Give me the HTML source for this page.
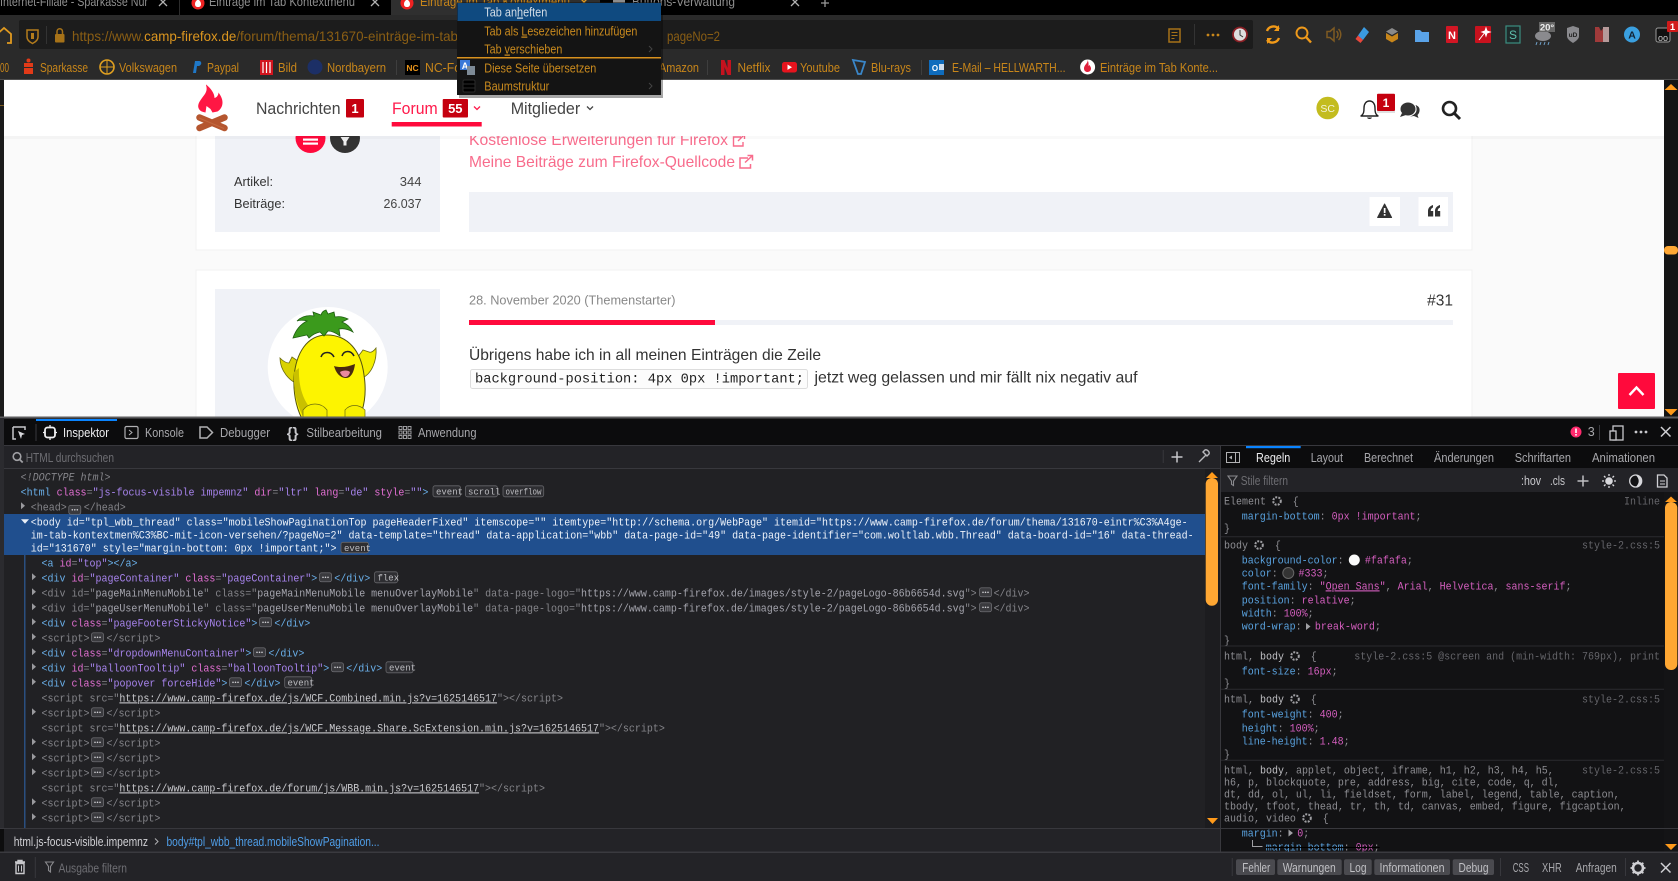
<!DOCTYPE html>
<html lang="de"><head><meta charset="utf-8"><title>Einträge im Tab Kontextmenü</title>
<style>
html,body{margin:0;padding:0;width:1678px;height:881px;overflow:hidden;background:#000}
svg{display:block}
text{font-family:"Liberation Sans",Arial,sans-serif;white-space:pre}
.m text,text.m{font-family:"Liberation Mono",monospace;font-size:11px}
.b text{font-size:12.5px;fill:#c8861a}
.t{fill:#6ab0ea}.n{fill:#e36fd3}.v{fill:#a884ee}.d{fill:#85858a}.e{fill:#a5a5ae}
.w{fill:#e8eef6}.u{fill:#c9c9cd;text-decoration:underline}
.p{fill:#5aa3e0}.q{fill:#d65fc0}.s{fill:#8e8e93}.o{fill:#65656a}
.ui text{font-size:12.5px;fill:#a8a8ac}
.pill{fill:#3a3a3e;stroke:#77777c;stroke-width:.7}
.bd text{font-size:9px;fill:#bcbcc0;font-family:"Liberation Mono",monospace}
.bdr{fill:#2e2e32;stroke:#66666a;stroke-width:.8}
.gear{fill:none;stroke:#a0a0a4;stroke-width:2}
</style></head><body>
<svg xmlns="http://www.w3.org/2000/svg" width="1678" height="881" viewBox="0 0 1678 881">
<defs><g id="pl"><rect width="12" height="9" rx="2" fill="#3a3a3e" stroke="#77777c" stroke-width=".7"/><circle cx="3.500" cy="4.500" r=".8" fill="#d0d0d4"/><circle cx="6" cy="4.500" r=".8" fill="#d0d0d4"/><circle cx="8.500" cy="4.500" r=".8" fill="#d0d0d4"/></g></defs>
<rect width="1678" height="881" fill="#0d0d0e"/>

<!-- PAGE -->
<rect x="4" y="80" width="1660" height="338" fill="#fafafa"/>
<rect x="196" y="130" width="1276" height="120" fill="#fff" stroke="#f1f1f1"/>
<rect x="196" y="270" width="1276" height="150" fill="#fff" stroke="#f1f1f1"/>
<rect x="215" y="130" width="225" height="102" fill="#f0f2f7"/>
<circle cx="310.5" cy="138" r="15" fill="#ff0a3c"/>
<rect x="303" y="138.500" width="15" height="2.200" fill="#fff"/><rect x="303" y="142.500" width="15" height="2.200" fill="#fff"/>
<circle cx="345" cy="138" r="15" fill="#333"/>
<path d="M340.500 137h9l-3 4.500v4h-3v-4z" fill="#eee"/>
<text x="234" y="186" font-size="13" fill="#333" textLength="39" lengthAdjust="spacingAndGlyphs">Artikel:</text>
<text x="421.500" y="186" font-size="13" fill="#444" text-anchor="end">344</text>
<text x="234" y="208" font-size="13" fill="#333" textLength="51" lengthAdjust="spacingAndGlyphs">Beiträge:</text>
<text x="421.500" y="208" font-size="13" fill="#444" text-anchor="end" textLength="38" lengthAdjust="spacingAndGlyphs">26.037</text>

<text x="469" y="145" font-size="16" fill="#f86c8c" textLength="259" lengthAdjust="spacingAndGlyphs">Kostenlose Erweiterungen für Firefox</text>
<path d="M741 137h-7.500v9h9.500v-4M738 141l6-6M740 134.500h4.500v4.500" fill="none" stroke="#f86c8c" stroke-width="1.400"/>
<text x="469" y="167" font-size="16" fill="#f86c8c" textLength="266" lengthAdjust="spacingAndGlyphs">Meine Beiträge zum Firefox-Quellcode</text>
<path d="M748 158h-8v10h10.500v-4M745 162.500l7-6.500M747.500 155.500h5v5" fill="none" stroke="#f86c8c" stroke-width="1.500"/>

<rect x="469" y="192" width="984" height="40" fill="#f0f2f7"/>
<rect x="1369.500" y="197" width="30.500" height="29" fill="#fff"/>
<rect x="1418.500" y="197" width="29.500" height="29" fill="#fff"/>
<path d="M1384.600 204l7 13.500h-14z" fill="#333" stroke="#333" stroke-linejoin="round"/>
<rect x="1383.800" y="208" width="1.700" height="5" fill="#fff"/><rect x="1383.800" y="214" width="1.700" height="1.700" fill="#fff"/>
<path d="M1433 205c-3 1-5 3-5 6v5.500h5.200v-5.500h-2.500c0-2 1-3 2.300-3.500zM1440 205c-3 1-5 3-5 6v5.500h5.200v-5.500h-2.500c0-2 1-3 2.300-3.500z" fill="#333"/>

<rect x="215" y="289" width="225" height="130" fill="#f0f2f7"/>
<ellipse cx="327.700" cy="367" rx="60" ry="60" fill="#fff"/>
<!-- pineapple avatar -->
<path d="M301 385c-12-3-21-15-21-27 3 3 6 5 9 5l3-6 9 6v22z" fill="#d9d200" stroke="#6b6b10" stroke-width=".8"/>
<path d="M362 378c10-4 15-18 14-30-2 3-5 5-7 4l-6-2-6 8z" fill="#f4ef00" stroke="#6b6b10" stroke-width=".8"/>
<path d="M327 335c-20 0-31 18-33 42-1 20 4 36 10 45h54c6-14 9-28 6-47-3-24-16-40-37-40z" fill="#fdf400" stroke="#55550c" stroke-width="1"/>
<path d="M294 372c-1 20 4 36 10 46h18c-14-8-24-24-23-50z" fill="#c9c000"/>
<path d="M303 410c6-8 18-8 24 0v8h-24zM345 410c5-6 14-6 20 0v8h-20z" fill="#f7f000" stroke="#6b6b10" stroke-width=".7"/>
<path d="M293 338c3-9 8-14 14-17-4-1-7-1-10 0 5-5 11-6 17-5l-1-4 8 3c1-3 2-4 5-5l2 4 6-2 1 5c5-1 9 0 13 2l-6 3c5 2 9 6 11 10-5-3-9-4-14-3l1 7c-4-3-8-5-12-5l-4 5-4-4c-5 1-8 3-11 6l-2-3c-5 1-9 2-14 3z" fill="#3b9a1c" stroke="#1e5e10" stroke-width=".8"/>
<path d="M321 357c2-6 10-6 13 0M342 356c2-6 9-6 12 0" fill="none" stroke="#222" stroke-width="1.600"/>
<path d="M334 366c6 2 14 1 21-2-1 8-4 14-9 14-6 0-10-5-12-12z" fill="#4a2a10"/>
<path d="M340 372c3-2 8-2 10 0-1 4-3 5-5 5-2 0-4-2-5-5z" fill="#e98aa0"/>

<text x="469" y="304.500" font-size="13" fill="#888" textLength="206.500" lengthAdjust="spacingAndGlyphs">28. November 2020 (Themenstarter)</text>
<text x="1453" y="305.500" font-size="15.500" fill="#333" text-anchor="end">#31</text>
<rect x="469" y="320" width="984" height="5" fill="#f0f2f7"/>
<rect x="469" y="320" width="246" height="5" fill="#ff0a3c"/>
<text x="469" y="360" font-size="16" fill="#333" textLength="352" lengthAdjust="spacingAndGlyphs">Übrigens habe ich in all meinen Einträgen die Zeile</text>
<rect x="470.500" y="369.500" width="337" height="19" rx="2" fill="#fcfcfc" stroke="#ddd"/>
<text x="475" y="382.500" style="font-family:'Liberation Mono',monospace" font-size="13.700" fill="#222" textLength="329" lengthAdjust="spacingAndGlyphs">background-position: 4px 0px !important;</text>
<text x="814.500" y="382.500" font-size="16" fill="#333" textLength="323" lengthAdjust="spacingAndGlyphs">jetzt weg gelassen und mir fällt nix negativ auf</text>

<rect x="1618" y="373" width="37" height="36" rx="1" fill="#ff0a3c"/>
<path d="M1629.500 395l7-7.500 7 7.500" fill="none" stroke="#fff" stroke-width="2.400"/>

<!-- header -->
<rect x="4" y="136" width="1660" height="3" fill="#000" opacity=".025"/>
<rect x="4" y="80" width="1660" height="56" fill="#fff"/>
<path d="M206 85c2 6-1 9-4 13-3 4-4.500 7-3.500 10 1 3 4 4 7 4.500l1-6.500 4 3 2 3.500 5-1c3-2 5-5 5-9 0-4-2-7-4-10 0 3-2 5-4 5.500 0-5-4-10-8.500-13.500z" fill="#ff1744"/>
<path d="M199.500 117.500l25 10.500M224.500 117.500l-25 10.500" stroke="#b5562f" stroke-width="6.500" stroke-linecap="round" fill="none"/>
<path d="M199 118l25 10.500" stroke="#d07a50" stroke-width="1" opacity=".5"/>
<text x="256" y="114" font-size="16.500" fill="#444" textLength="84.500" lengthAdjust="spacingAndGlyphs">Nachrichten</text>
<rect x="346" y="99" width="18" height="18.500" rx="1" fill="#c5000f"/>
<text x="355" y="113" font-size="13" font-weight="bold" fill="#fff" text-anchor="middle">1</text>
<text x="392" y="114" font-size="16.500" fill="#ff1a4b" textLength="45.700" lengthAdjust="spacingAndGlyphs">Forum</text>
<rect x="442.700" y="99" width="25.300" height="18.500" rx="1" fill="#c5000f"/>
<text x="455.300" y="113" font-size="13" font-weight="bold" fill="#fff" text-anchor="middle">55</text>
<path d="M474 106.500l3 3 3-3" fill="none" stroke="#ff1a4b" stroke-width="1.300"/>
<rect x="391.700" y="122" width="90" height="4.500" fill="#ff0a3c"/>
<text x="510.700" y="114" font-size="16.500" fill="#444" textLength="69.500" lengthAdjust="spacingAndGlyphs">Mitglieder</text>
<path d="M587 106.500l3 3 3-3" fill="none" stroke="#444" stroke-width="1.300"/>

<circle cx="1327.700" cy="108" r="11.300" fill="#c3bc1f"/>
<text x="1327.700" y="112" font-size="10.500" fill="#f4f4d8" text-anchor="middle">SC</text>
<path d="M1361 116c3-2 3-5 3-8 0-4 2-7 5.500-7s5.500 3 5.500 7c0 3 0 6 3 8z" fill="none" stroke="#222" stroke-width="1.400" stroke-linejoin="round"/>
<path d="M1367 117.500c.5 2 4.500 2 5 0z" fill="#222"/>
<rect x="1377" y="93.700" width="18" height="17.300" rx="1" fill="#c5000f"/>
<rect x="1377" y="111" width="18" height="2" fill="#000" opacity=".12"/>
<text x="1386" y="107" font-size="12" font-weight="bold" fill="#fff" text-anchor="middle">1</text>
<ellipse cx="1408" cy="109" rx="7.500" ry="6.500" fill="#333"/><path d="M1402 113l-2 4 6-2z" fill="#333"/>
<path d="M1415.500 105c3 1 4.500 3 4 6-.3 2-1 3-2 4l1 3-4.500-2-4 .5c3-1 6-3 6.500-6 .2-2 0-3.500-1-5.500z" fill="#333"/>
<circle cx="1449.500" cy="108.500" r="6.500" fill="none" stroke="#222" stroke-width="2.600"/>
<path d="M1454.500 113.500l5.500 5.500" stroke="#222" stroke-width="3"/>

<!-- page scrollbar and left strip -->
<rect x="1664" y="80" width="14" height="338" fill="#141414"/>
<path d="M1664.500 90l6.500-6 6.500 6z" fill="#ff9a1a"/>
<path d="M1664.500 409l6.500 6.500 6.500-6.500z" fill="#ff9a1a"/>
<rect x="1664" y="246" width="14" height="8.500" rx="4" fill="#ffa733"/>
<rect x="0" y="80" width="4" height="338" fill="#1b1b1b"/>
<rect x="0" y="105" width="4" height="1" fill="#7a5a20"/>

<!-- BROWSER CHROME -->
<rect x="0" y="0" width="1678" height="15" fill="#000"/>
<rect x="0" y="15" width="1678" height="65" fill="#2a2a2a"/>
<rect x="0" y="79" width="1678" height="1" fill="#4e4e4e"/>
<rect x="391" y="0" width="209" height="15" fill="#2f2f2f"/>
<g font-size="13">
<text x="0" y="6" fill="#8e8e8e" textLength="148" lengthAdjust="spacingAndGlyphs">Internet-Filiale - Sparkasse Nür</text>
<text x="209" y="6" fill="#8e8e8e" textLength="146" lengthAdjust="spacingAndGlyphs">Einträge im Tab Kontextmenü</text>
<text x="420" y="6" fill="#c8861a" textLength="150" lengthAdjust="spacingAndGlyphs">Einträge im Tab Kontextmenü</text>
<text x="632" y="6" fill="#8e8e8e" textLength="103" lengthAdjust="spacingAndGlyphs">Buttons-Verwaltung</text>
</g>
<path d="M159 -2l8 8M167 -2l-8 8M371 -2l8 8M379 -2l-8 8M791 -2l8 8M799 -2l-8 8" stroke="#b0b0b0" stroke-width="1.300" fill="none"/>
<path d="M580 -2l8 8M588 -2l-8 8" stroke="#e09a20" stroke-width="1.300" fill="none"/>
<path d="M825 0v7M821 3h8" stroke="#999" stroke-width="1.300"/>
<rect x="179" y="0" width="1" height="15" fill="#2c2c2c"/>
<circle cx="198" cy="3" r="6.500" fill="#e22"/><circle cx="407" cy="3" r="6.500" fill="#e22"/>
<path d="M198 -1c-2 2-3 3-3 5s1 3 3 3 3-1 3-3-1-3-3-5zM407 -1c-2 2-3 3-3 5s1 3 3 3 3-1 3-3-1-3-3-5z" fill="#fff"/>
<rect x="613" y="0" width="12" height="7" fill="#8c8c8c"/>

<!-- url bar -->
<rect x="19" y="20" width="1234" height="29" rx="2" fill="#1c1c1c"/>
<path d="M-5 36l9-8 7 6v9h-4" fill="none" stroke="#e09a20" stroke-width="1.800"/>
<path d="M27 30h11v7c0 3-2.500 5-5.500 6.500C29.500 42 27 40 27 37z" fill="none" stroke="#b47c1c" stroke-width="1.500"/>
<rect x="31" y="33" width="3" height="6" fill="#b47c1c"/>
<rect x="46" y="26" width="1" height="18" fill="#333"/>
<rect x="55" y="34" width="9.500" height="8.500" rx="1" fill="#a67218"/><path d="M57 34v-2.500a2.700 2.700 0 0 1 5.500 0V34" fill="none" stroke="#a67218" stroke-width="1.500"/>
<text x="72" y="41" font-size="14" fill="#8a5e14" textLength="386" lengthAdjust="spacingAndGlyphs">https://www.<tspan fill="#dc961f">camp-firefox.de</tspan>/forum/thema/131670-einträge-im-tab</text>
<text x="667" y="41" font-size="14" fill="#8a5e14" textLength="53" lengthAdjust="spacingAndGlyphs">pageNo=2</text>
<rect x="1169" y="29" width="11" height="13" fill="none" stroke="#a67218" stroke-width="1.500"/>
<path d="M1171.500 32.500h6M1171.500 35.500h6M1171.500 38.500h3" stroke="#a67218"/>
<rect x="1194" y="24" width="1" height="21" fill="#333"/>
<circle cx="1208" cy="35" r="1.400" fill="#c8861a"/><circle cx="1213" cy="35" r="1.400" fill="#c8861a"/><circle cx="1218" cy="35" r="1.400" fill="#c8861a"/>
<circle cx="1240" cy="34.500" r="7" fill="#ddd" stroke="#8a1f25" stroke-width="1.800"/><path d="M1240 30v5l3 2" stroke="#333" fill="none"/>
<!-- toolbar icons -->
<path d="M1267 31a7 7 0 0 1 12-2M1279 38a7 7 0 0 1-12 2" fill="none" stroke="#f29a18" stroke-width="2.400"/>
<path d="M1279 25v6h-5zM1267 44v-6h5z" fill="#f29a18"/>
<circle cx="1302" cy="33" r="5.500" fill="none" stroke="#f09a1a" stroke-width="1.900"/><path d="M1306 37l5 5.500" stroke="#f09a1a" stroke-width="2.400"/>
<path d="M1327 31.500h3l4-3.500v13l-4-3.500h-3zM1336.500 31c2 2 2 5 0 7M1338.500 29c3 3 3 8 0 11" fill="none" stroke="#7e5a22" stroke-width="1.500"/>
<path d="M1364 27l5 5-6 8-5-4.500z" fill="#3a9ae0"/><path d="M1358 35.500l5 4.500-2.500 3-5-4z" fill="#e8473c"/>
<path d="M1392 28l6 3.500-6 3.500-6-3.500z" fill="#8a8a8a"/><path d="M1386 33l6 3.500v6l-6-3.500zM1398 33l-6 3.500v6l6-3.500z" fill="#c8861a"/>
<path d="M1415 30h5l2 2h7v10h-14z" fill="#5aa3e8"/>
<rect x="1446" y="26" width="12" height="17" rx="1" fill="#d21624"/><text x="1452" y="39" font-size="11" font-weight="bold" fill="#fff" text-anchor="middle">N</text>
<rect x="1475" y="26" width="16" height="17" rx="1" fill="#c8121e"/><path d="M1479 40l7-9M1486 28l1 3 3 1-3 1-1 3-1-3-3-1 3-1z" stroke="#fff" fill="#fff" stroke-width="1"/>
<rect x="1506" y="26" width="14" height="17" fill="#1e2b2b" stroke="#3b8e80" stroke-width="1.200"/><text x="1513" y="39" font-size="12" fill="#5fc0ae" text-anchor="middle">S</text>
<ellipse cx="1543" cy="36" rx="8" ry="5" fill="#8a8a8e"/><path d="M1537 42l-1 3M1541 42l-1 3M1545 42l-1 3M1549 42l-1 3" stroke="#6fa0c8"/>
<rect x="1539" y="22" width="16" height="10" fill="#666"/><text x="1547" y="30.500" font-size="9.500" font-weight="bold" fill="#eee" text-anchor="middle">20°</text>
<path d="M1567 28l6-2 6 2v8c0 3-3 5-6 7-3-2-6-4-6-7z" fill="#8a8a8e"/><text x="1573" y="37" font-size="6.500" font-weight="bold" fill="#222" text-anchor="middle">uD</text>
<path d="M1595 27h4l2 4 3-4h5v15h-14z" fill="#a03a3a"/><path d="M1603 27h6v15h-6z" fill="#b59a9a"/>
<circle cx="1632" cy="34.500" r="8" fill="#3aa0e0"/><text x="1632" y="38.500" font-size="10.500" font-weight="bold" fill="#123" text-anchor="middle">A</text>
<rect x="1656" y="28" width="14" height="14" rx="2" fill="#111" stroke="#9a9a9a"/><text x="1663" y="41" font-size="9" fill="#ccc" text-anchor="middle">oo</text>
<rect x="1667" y="21" width="11" height="11" rx="1" fill="#d11a1a"/><text x="1672.500" y="30" font-size="9.500" font-weight="bold" fill="#fff" text-anchor="middle">1</text>

<!-- bookmarks -->
<g class="b">
<text x="0" y="72" textLength="9" lengthAdjust="spacingAndGlyphs">00</text>
<rect x="24" y="63" width="9" height="4" fill="#e23a18"/><rect x="24" y="68" width="9" height="6" fill="#e23a18"/><circle cx="28.500" cy="60.500" r="2" fill="#e23a18"/>
<text x="40" y="72" textLength="48" lengthAdjust="spacingAndGlyphs">Sparkasse</text>
<circle cx="107" cy="67" r="7" fill="none" stroke="#e0a020" stroke-width="1.600"/><path d="M100 67h14M107 60v14" stroke="#e0a020"/>
<text x="119" y="72" textLength="58" lengthAdjust="spacingAndGlyphs">Volkswagen</text>
<path d="M195 61h4c3 0 3 4 0 5h-2l-1 7h-3z" fill="#1f78c8"/>
<text x="207" y="72" textLength="32" lengthAdjust="spacingAndGlyphs">Paypal</text>
<rect x="260" y="60" width="13" height="15" fill="#d2141e"/><path d="M263 62v11M266.500 62v11M270 62v11" stroke="#fff" stroke-width="1.200"/>
<text x="278" y="72" textLength="19" lengthAdjust="spacingAndGlyphs">Bild</text>
<circle cx="315" cy="67" r="7.500" fill="#1c2f66"/>
<text x="327" y="72" textLength="59" lengthAdjust="spacingAndGlyphs">Nordbayern</text>
<rect x="396" y="60" width="1" height="15" fill="#3e3e3e"/>
<rect x="405" y="60" width="15" height="15" fill="#000"/><text x="412.500" y="71" style="font-size:8.500px;fill:#e8931a;font-weight:bold" text-anchor="middle">NC</text>
<text x="425" y="72" textLength="36" lengthAdjust="spacingAndGlyphs">NC-Fo</text>
<text x="659" y="72" textLength="40" lengthAdjust="spacingAndGlyphs">Amazon</text>
<rect x="707" y="60" width="1" height="15" fill="#3e3e3e"/>
<path d="M721 60h3.500l3 8v-8h3.500v15h-3.500l-3-8v8H721z" fill="#c4121e"/>
<text x="737.500" y="72" textLength="33" lengthAdjust="spacingAndGlyphs">Netflix</text>
<rect x="782" y="62" width="15" height="10.500" rx="2.500" fill="#e6141e"/><path d="M787.500 64.500l4.500 2.700-4.500 2.700z" fill="#fff"/>
<text x="800" y="72" textLength="40" lengthAdjust="spacingAndGlyphs">Youtube</text>
<path d="M853 60l12 2-4 12h-3z" fill="none" stroke="#3a86c8" stroke-width="1.800"/>
<text x="871" y="72" textLength="40" lengthAdjust="spacingAndGlyphs">Blu-rays</text>
<rect x="921" y="60" width="1" height="15" fill="#3e3e3e"/>
<rect x="929" y="60" width="15" height="15" fill="#0f6cbd"/><text x="935" y="71" style="font-size:8px;fill:#fff;font-weight:bold" text-anchor="middle">O</text><rect x="939" y="64" width="5" height="6" fill="#cde"/>
<text x="952" y="72" textLength="113.500" lengthAdjust="spacingAndGlyphs">E-Mail – HELLWARTH...</text>
<circle cx="1087.600" cy="67" r="7.500" fill="#fff"/><path d="M1087.500 60c1 3-4 5-3.500 9 .3 2 2 3 3.500 3s3.500-1 3.500-3.500c0-1.500-1-2.500-1.500-3.500l-1 1c.2-2.500 0-4.500-1-6z" fill="#e0203c"/>
<text x="1100" y="72" textLength="118" lengthAdjust="spacingAndGlyphs">Einträge im Tab Konte...</text>
</g>

<!-- context menu -->
<rect x="459" y="5" width="204" height="93" fill="#000" opacity=".35"/>
<rect x="457" y="2.500" width="204" height="92.500" fill="#141414"/>
<rect x="457.500" y="3" width="203.500" height="18" fill="#0f4a80"/>
<g font-size="12.500">
<text x="484.300" y="16.500" fill="#d3dde6" textLength="63" lengthAdjust="spacingAndGlyphs">Tab an<tspan text-decoration="underline">h</tspan>eften</text>
<text x="484.300" y="35.500" fill="#c98a1e" textLength="153" lengthAdjust="spacingAndGlyphs">Tab als <tspan text-decoration="underline">L</tspan>esezeichen hinzufügen</text>
<text x="484.300" y="53.500" fill="#c98a1e" textLength="78" lengthAdjust="spacingAndGlyphs">Tab <tspan text-decoration="underline">v</tspan>erschieben</text>
<text x="484.300" y="72.500" fill="#c98a1e" textLength="112" lengthAdjust="spacingAndGlyphs">Diese Seite übersetzen</text>
<text x="484.300" y="90.500" fill="#c98a1e" textLength="65" lengthAdjust="spacingAndGlyphs">Baumstruktur</text>
</g>
<rect x="457" y="57" width="204" height="1.500" fill="#d8911e"/>
<path d="M649 46l3 3-3 3M649 83l3 3-3 3" fill="none" stroke="#444"/>
<rect x="460" y="60" width="10" height="10" fill="#3a78d8"/><text x="465" y="69" font-size="9" font-weight="bold" fill="#fff" text-anchor="middle">A</text>
<rect x="467" y="66" width="8" height="9" fill="#7d8a96"/>
<rect x="463" y="80" width="12" height="12" rx="1.500" fill="#000" stroke="#2a2a2a"/><path d="M463 84h12M463 88h12" stroke="#2a2a2a"/>

<!-- DEVTOOLS -->
<rect x="0" y="416.500" width="1678" height="2" fill="#5c5c5e"/>
<rect x="0" y="418.500" width="1678" height="27" fill="#0c0c0d"/>
<rect x="0" y="445" width="1220" height="23" fill="#232327"/>
<rect x="0" y="445" width="1678" height="1" fill="#38383d"/>
<rect x="0" y="468" width="1220" height="1" fill="#38383d"/>
<rect x="4" y="469" width="1216" height="359" fill="#212124"/>
<rect x="0" y="418" width="4" height="411" fill="#2b2b2f"/>
<rect x="1220" y="446" width="458" height="23" fill="#0c0c0d"/>
<rect x="1220" y="468" width="458" height="24" fill="#232327"/>
<rect x="1220" y="492" width="458" height="360" fill="#121214"/>
<rect x="1220" y="446" width="1" height="406" fill="#38383d"/>
<rect x="36" y="419" width="81" height="2" fill="#0a84ff"/>
<path d="M13 427h12v3M13 427v12h3" fill="none" stroke="#c8c8cc" stroke-width="1.500"/><path d="M18 431l7 3-3 1-1 4z" fill="#d8d8dc"/>
<rect x="35.500" y="424" width="1" height="17" fill="#38383d"/>
<rect x="45" y="427.500" width="10" height="10" rx="2.500" fill="none" stroke="#f0f0f2" stroke-width="1.800"/><path d="M50 425v2.500M50 437.500v2.500M43 432.500h2M55 432.500h2" stroke="#f0f0f2" stroke-width="1.300"/>
<rect x="125" y="426.500" width="13" height="12" rx="1.500" fill="none" stroke="#b1b1b3" stroke-width="1.200"/><path d="M129 430l3 2.500-3 2.500" fill="none" stroke="#b1b1b3"/>
<path d="M200 427h7l5.500 5.500-5.500 5.500h-7z" fill="none" stroke="#b1b1b3" stroke-width="1.500"/>
<text x="292.600" y="438" font-size="15" font-weight="bold" fill="#c8c8cc" text-anchor="middle">{}</text>
<g fill="none" stroke="#a8a8ac" stroke-width=".9"><rect x="399" y="426.500" width="3" height="3"/><rect x="403.500" y="426.500" width="3" height="3"/><rect x="408" y="426.500" width="3" height="3"/><rect x="399" y="431" width="3" height="3"/><rect x="403.500" y="431" width="3" height="3"/><rect x="408" y="431" width="3" height="3"/><rect x="399" y="435.500" width="3" height="3"/><rect x="403.500" y="435.500" width="3" height="3"/><rect x="408" y="435.500" width="3" height="3"/></g>
<g class="ui">
<text x="63" y="437" style="fill:#eeeef0" textLength="46" lengthAdjust="spacingAndGlyphs">Inspektor</text>
<text x="145" y="437" textLength="39" lengthAdjust="spacingAndGlyphs">Konsole</text>
<text x="220" y="437" textLength="50" lengthAdjust="spacingAndGlyphs">Debugger</text>
<text x="306.400" y="437" textLength="75.600" lengthAdjust="spacingAndGlyphs">Stilbearbeitung</text>
<text x="418" y="437" textLength="58.500" lengthAdjust="spacingAndGlyphs">Anwendung</text>
<text x="25.700" y="462" style="fill:#6d6d72" textLength="88.300" lengthAdjust="spacingAndGlyphs">HTML durchsuchen</text>
<text x="1256" y="462" style="fill:#eeeef0" textLength="34.300" lengthAdjust="spacingAndGlyphs">Regeln</text>
<text x="1310.700" y="462" textLength="32.300" lengthAdjust="spacingAndGlyphs">Layout</text>
<text x="1364" y="462" textLength="49" lengthAdjust="spacingAndGlyphs">Berechnet</text>
<text x="1434" y="462" textLength="60" lengthAdjust="spacingAndGlyphs">Änderungen</text>
<text x="1514.700" y="462" textLength="56.300" lengthAdjust="spacingAndGlyphs">Schriftarten</text>
<text x="1592" y="462" textLength="63" lengthAdjust="spacingAndGlyphs">Animationen</text>
<text x="1240.700" y="485" style="fill:#6d6d72" textLength="47.300" lengthAdjust="spacingAndGlyphs">Stile filtern</text>
<text x="1521" y="485" style="fill:#c8c8cc" textLength="20" lengthAdjust="spacingAndGlyphs">:hov</text>
<text x="1550" y="485" style="fill:#c8c8cc" textLength="15" lengthAdjust="spacingAndGlyphs">.cls</text>
<text x="1587.700" y="436" style="fill:#a8a8ac">3</text>
</g>
<circle cx="17" cy="456.500" r="3.800" fill="none" stroke="#a0a0a4" stroke-width="1.600"/><path d="M19.700 459.500l3 3" stroke="#a0a0a4" stroke-width="1.800"/>
<rect x="1162.700" y="450" width="1" height="13" fill="#38383d"/>
<path d="M1177 451.500v11M1171.500 457h11" stroke="#c8c8cc" stroke-width="1.500"/>
<path d="M1199 462l7-7M1203 452l4 4 2-2c1-2-2-5-4-4z" fill="none" stroke="#b8b8bc" stroke-width="1.400"/>
<!-- devtools top right -->
<circle cx="1576" cy="432" r="5.500" fill="#ff2a6d"/><rect x="1575.200" y="428.500" width="1.600" height="4.500" fill="#fff"/><rect x="1575.200" y="434" width="1.600" height="1.600" fill="#fff"/>
<rect x="1599" y="425" width="1" height="15" fill="#38383d"/>
<rect x="1613" y="426" width="10" height="14" fill="none" stroke="#c8c8cc" stroke-width="1.300"/><rect x="1610" y="431" width="6" height="9" fill="#0c0c0d" stroke="#c8c8cc" stroke-width="1.300"/>
<circle cx="1636" cy="432" r="1.400" fill="#c8c8cc"/><circle cx="1641" cy="432" r="1.400" fill="#c8c8cc"/><circle cx="1646" cy="432" r="1.400" fill="#c8c8cc"/>
<path d="M1661 427l9.500 9.500M1670.500 427l-9.500 9.500" stroke="#d0d0d4" stroke-width="1.500"/>
<!-- rules tab icons -->
<rect x="1226.500" y="452.500" width="13" height="10" fill="none" stroke="#b1b1b3"/><rect x="1235" y="452.500" width="1" height="10" fill="#b1b1b3"/><path d="M1232 455.500l-3 2 3 2z" fill="#b1b1b3"/>
<rect x="1246" y="446" width="54.700" height="2.200" fill="#0a84ff"/>
<path d="M1228 476h9l-3.500 5v4.500l-2-1.200V481z" fill="none" stroke="#8a8a8e" stroke-width="1.100"/>
<path d="M1583 475.500v11M1577.500 481h11" stroke="#c0c0c4" stroke-width="1.500"/>
<circle cx="1609" cy="481" r="3.800" fill="#d8d8dc"/><path d="M1609 474v2M1609 486v2M1602 481h2M1614 481h2M1604 476l1.500 1.500M1612.500 484.500l1.500 1.500M1604 486l1.500-1.500M1612.500 477.500l1.500-1.500" stroke="#d8d8dc" stroke-width="1.300"/>
<circle cx="1635.700" cy="481" r="6" fill="#121214" stroke="#d8d8dc" stroke-width="1.300"/><path d="M1635.700 475a6 6 0 0 1 0 12c2-2 3-4 3-6s-1-4-3-6z" fill="#d8d8dc"/>
<path d="M1657.500 475h6.500l3 3v9h-9.500z" fill="none" stroke="#d0d0d4" stroke-width="1.300"/><path d="M1660 481h5M1660 484h5" stroke="#d0d0d4"/>

<!-- highlighted row and tree -->
<rect x="4" y="514" width="1201" height="41" fill="#204f8e"/>
<rect x="24" y="555" width="1.500" height="273" fill="#2a4f80"/>
<g fill="#9a9a9e" transform="translate(0 -.7)">
<path d="M21 503l4 3.500-4 3.500z"/>
<path d="M21 520h8l-4 4.500z" fill="#e8eef6"/>
<path d="M32 574l4 3.500-4 3.500zM32 589l4 3.500-4 3.500zM32 604l4 3.500-4 3.500zM32 619l4 3.500-4 3.500zM32 634l4 3.500-4 3.500zM32 649l4 3.500-4 3.500zM32 664l4 3.500-4 3.500zM32 679l4 3.500-4 3.500zM32 709l4 3.500-4 3.500zM32 739l4 3.500-4 3.500zM32 754l4 3.500-4 3.500zM32 769l4 3.500-4 3.500zM32 799l4 3.500-4 3.500zM32 814l4 3.500-4 3.500z"/>
</g>
<g class="m" transform="translate(20.600 -.7) scale(.909 1)">
<text y="481" class="d" font-style="italic">&lt;!DOCTYPE html&gt;</text>
<text y="496"><tspan class="t">&lt;html</tspan> <tspan class="n">class</tspan><tspan class="d">=</tspan><tspan class="v">"js-focus-visible impemnz"</tspan> <tspan class="n">dir</tspan><tspan class="d">=</tspan><tspan class="v">"ltr"</tspan> <tspan class="n">lang</tspan><tspan class="d">=</tspan><tspan class="v">"de"</tspan> <tspan class="n">style</tspan><tspan class="d">=</tspan><tspan class="v">""</tspan><tspan class="t">&gt;</tspan></text>
</g>
<g class="m" transform="translate(30.800 -.7) scale(.909 1)">
<text y="511"><tspan class="d">&lt;head&gt;</tspan><tspan class="d" dx="18.700">&lt;/head&gt;</tspan></text>
<g fill="#eef3fa">
<text y="526">&lt;body id="tpl_wbb_thread" class="mobileShowPaginationTop pageHeaderFixed" itemscope="" itemtype="http://schema.org/WebPage" itemid="https://www.camp-firefox.de/forum/thema/131670-eintr%C3%A4ge-</text>
<text y="539">im-tab-kontextmen%C3%BC-mit-icon-versehen/?pageNo=2" data-template="thread" data-application="wbb" data-page-id="49" data-page-identifier="com.woltlab.wbb.Thread" data-board-id="16" data-thread-</text>
<text y="552">id="131670" style="margin-bottom: 0px !important;"&gt;</text>
</g>
</g>
<g class="m" transform="translate(41.500 -.7) scale(.909 1)">
<text y="567"><tspan class="t">&lt;a</tspan> <tspan class="n">id</tspan><tspan class="d">=</tspan><tspan class="v">"top"</tspan><tspan class="t">&gt;&lt;/a&gt;</tspan></text>
<text y="582"><tspan class="t">&lt;div</tspan> <tspan class="n">id</tspan><tspan class="d">=</tspan><tspan class="v">"pageContainer"</tspan> <tspan class="n">class</tspan><tspan class="d">=</tspan><tspan class="v">"pageContainer"</tspan><tspan class="t">&gt;</tspan><tspan class="t" dx="18.700">&lt;/div&gt;</tspan></text>
<text y="597" class="d">&lt;div id="<tspan class="e">pageMainMenuMobile</tspan>" class="<tspan class="e">pageMainMenuMobile menuOverlayMobile</tspan>" data-page-logo="<tspan class="e">https://www.camp-firefox.de/images/style-2/pageLogo-86b6654d.svg</tspan>"&gt;<tspan dx="18.700">&lt;/div&gt;</tspan></text>
<text y="612" class="d">&lt;div id="<tspan class="e">pageUserMenuMobile</tspan>" class="<tspan class="e">pageUserMenuMobile menuOverlayMobile</tspan>" data-page-logo="<tspan class="e">https://www.camp-firefox.de/images/style-2/pageLogo-86b6654d.svg</tspan>"&gt;<tspan dx="18.700">&lt;/div&gt;</tspan></text>
<text y="627"><tspan class="t">&lt;div</tspan> <tspan class="n">class</tspan><tspan class="d">=</tspan><tspan class="v">"pageFooterStickyNotice"</tspan><tspan class="t">&gt;</tspan><tspan class="t" dx="18.700">&lt;/div&gt;</tspan></text>
<text y="642" class="d">&lt;script&gt;<tspan dx="18.700">&lt;/script&gt;</tspan></text>
<text y="657"><tspan class="t">&lt;div</tspan> <tspan class="n">class</tspan><tspan class="d">=</tspan><tspan class="v">"dropdownMenuContainer"</tspan><tspan class="t">&gt;</tspan><tspan class="t" dx="18.700">&lt;/div&gt;</tspan></text>
<text y="672"><tspan class="t">&lt;div</tspan> <tspan class="n">id</tspan><tspan class="d">=</tspan><tspan class="v">"balloonTooltip"</tspan> <tspan class="n">class</tspan><tspan class="d">=</tspan><tspan class="v">"balloonTooltip"</tspan><tspan class="t">&gt;</tspan><tspan class="t" dx="18.700">&lt;/div&gt;</tspan></text>
<text y="687"><tspan class="t">&lt;div</tspan> <tspan class="n">class</tspan><tspan class="d">=</tspan><tspan class="v">"popover forceHide"</tspan><tspan class="t">&gt;</tspan><tspan class="t" dx="18.700">&lt;/div&gt;</tspan></text>
<text y="702" class="d">&lt;script src="<tspan class="u">https://www.camp-firefox.de/js/WCF.Combined.min.js?v=1625146517</tspan>"&gt;&lt;/script&gt;</text>
<text y="717" class="d">&lt;script&gt;<tspan dx="18.700">&lt;/script&gt;</tspan></text>
<text y="732" class="d">&lt;script src="<tspan class="u">https://www.camp-firefox.de/js/WCF.Message.Share.ScExtension.min.js?v=1625146517</tspan>"&gt;&lt;/script&gt;</text>
<text y="747" class="d">&lt;script&gt;<tspan dx="18.700">&lt;/script&gt;</tspan></text>
<text y="762" class="d">&lt;script&gt;<tspan dx="18.700">&lt;/script&gt;</tspan></text>
<text y="777" class="d">&lt;script&gt;<tspan dx="18.700">&lt;/script&gt;</tspan></text>
<text y="792" class="d">&lt;script src="<tspan class="u">https://www.camp-firefox.de/forum/js/WBB.min.js?v=1625146517</tspan>"&gt;&lt;/script&gt;</text>
<text y="807" class="d">&lt;script&gt;<tspan dx="18.700">&lt;/script&gt;</tspan></text>
<text y="822" class="d">&lt;script&gt;<tspan dx="18.700">&lt;/script&gt;</tspan></text>
</g>
<!-- pills -->
<g transform="translate(0 -.7)">
<use href="#pl" x="68.800" y="506"/>
<use href="#pl" x="319.500" y="573.500"/>
<use href="#pl" x="979.500" y="588.500"/>
<use href="#pl" x="979.500" y="603.500"/>
<use href="#pl" x="259.500" y="618.500"/>
<use href="#pl" x="91.500" y="633.500"/>
<use href="#pl" x="253.500" y="648.500"/>
<use href="#pl" x="331.500" y="663.500"/>
<use href="#pl" x="229.500" y="678.500"/>
<use href="#pl" x="91.500" y="708.500"/>
<use href="#pl" x="91.500" y="738.500"/>
<use href="#pl" x="91.500" y="753.500"/>
<use href="#pl" x="91.500" y="768.500"/>
<use href="#pl" x="91.500" y="798.500"/>
<use href="#pl" x="91.500" y="813.500"/>
</g>
<!-- badges -->
<g class="bd" transform="translate(0 -.7)">
<rect class="bdr" x="433" y="486.500" width="27.500" height="11" rx="2"/><text x="436" y="495">event</text>
<rect class="bdr" x="465.400" y="486.500" width="32" height="11" rx="2"/><text x="468" y="495">scroll</text>
<rect class="bdr" x="503" y="486.500" width="40.700" height="11" rx="2"/><text x="505.500" y="495" textLength="36" lengthAdjust="spacingAndGlyphs">overflow</text>
<rect class="bdr" x="341" y="543" width="27.500" height="10.500" rx="2"/><text x="344" y="551.500">event</text>
<rect class="bdr" x="374.500" y="572.500" width="23" height="11" rx="2"/><text x="377.500" y="581">flex</text>
<rect class="bdr" x="386" y="662.500" width="27" height="11" rx="2"/><text x="389" y="671">event</text>
<rect class="bdr" x="284.700" y="677.500" width="27" height="11" rx="2"/><text x="287.500" y="686">event</text>
</g>
<!-- tree scrollbar -->
<rect x="1205" y="469" width="15" height="359" fill="#1c1c1f"/>
<path d="M1206 478l6-6 6 6zM1207 818h11l-5.500 6z" fill="#ff9a1a"/>
<rect x="1205.700" y="478" width="12.300" height="127.700" rx="6" fill="#ffa733"/>

<!-- rules -->
<g class="m" transform="translate(1224 -.7) scale(.909 1)">
<text y="505" class="s">Element</text><text x="75.600" y="505" class="s">{</text>
<text x="479.600" y="505" class="o" text-anchor="end">Inline</text>
<text x="19.500" y="520"><tspan class="p">margin-bottom</tspan><tspan class="s">: </tspan><tspan class="q">0px !important</tspan><tspan class="s">;</tspan></text>
<text y="532" class="s">}</text>

<text y="549" class="s">body</text><text x="56" y="549" class="s">{</text>
<text x="479.600" y="549" class="o" text-anchor="end">style-2.css:5</text>
<text x="19.500" y="564"><tspan class="p">background-color</tspan><tspan class="s">:</tspan></text><text x="155" y="564"><tspan class="q">#fafafa</tspan><tspan class="s">;</tspan></text>
<text x="19.500" y="577"><tspan class="p">color</tspan><tspan class="s">:</tspan></text><text x="82" y="577"><tspan class="q">#333</tspan><tspan class="s">;</tspan></text>
<text x="19.500" y="590"><tspan class="p">font-family</tspan><tspan class="s">: </tspan><tspan class="q">"<tspan text-decoration="underline">Open Sans</tspan>"</tspan><tspan class="s">, </tspan><tspan class="q">Arial</tspan><tspan class="s">, </tspan><tspan class="q">Helvetica</tspan><tspan class="s">, </tspan><tspan class="q">sans-serif</tspan><tspan class="s">;</tspan></text>
<text x="19.500" y="604"><tspan class="p">position</tspan><tspan class="s">: </tspan><tspan class="q">relative</tspan><tspan class="s">;</tspan></text>
<text x="19.500" y="617"><tspan class="p">width</tspan><tspan class="s">: </tspan><tspan class="q">100%</tspan><tspan class="s">;</tspan></text>
<text x="19.500" y="630"><tspan class="p">word-wrap</tspan><tspan class="s">:</tspan></text><text x="100" y="630"><tspan class="q">break-word</tspan><tspan class="s">;</tspan></text>
<text y="644" class="s">}</text>

<text y="660" class="s">html, <tspan fill="#c0c0c4">body</tspan></text><text x="95.400" y="660" class="s">{</text>
<text x="479.600" y="660" class="o" text-anchor="end">style-2.css:5 @screen and (min-width: 769px), print</text>
<text x="19.500" y="675"><tspan class="p">font-size</tspan><tspan class="s">: </tspan><tspan class="q">16px</tspan><tspan class="s">;</tspan></text>
<text y="687" class="s">}</text>

<text y="703" class="s">html, <tspan fill="#c0c0c4">body</tspan></text><text x="95.400" y="703" class="s">{</text>
<text x="479.600" y="703" class="o" text-anchor="end">style-2.css:5</text>
<text x="19.500" y="718"><tspan class="p">font-weight</tspan><tspan class="s">: </tspan><tspan class="q">400</tspan><tspan class="s">;</tspan></text>
<text x="19.500" y="732"><tspan class="p">height</tspan><tspan class="s">: </tspan><tspan class="q">100%</tspan><tspan class="s">;</tspan></text>
<text x="19.500" y="745"><tspan class="p">line-height</tspan><tspan class="s">: </tspan><tspan class="q">1.48</tspan><tspan class="s">;</tspan></text>
<text y="758" class="s">}</text>

<text y="774" class="s">html, <tspan fill="#c0c0c4">body</tspan>, applet, object, iframe, h1, h2, h3, h4, h5,</text>
<text x="479.600" y="774" class="o" text-anchor="end">style-2.css:5</text>
<text y="786" class="s">h6, p, blockquote, pre, address, big, cite, code, q, dl,</text>
<text y="798" class="s">dt, dd, ol, ul, li, fieldset, form, label, legend, table, caption,</text>
<text y="810" class="s">tbody, tfoot, thead, tr, th, td, canvas, embed, figure, figcaption,</text>
<text y="822" class="s">audio, video</text><text x="108.600" y="822" class="s">{</text>
<text x="19.500" y="837"><tspan class="p">margin</tspan><tspan class="s">:</tspan></text><text x="80.600" y="837"><tspan class="q">0</tspan><tspan class="s">;</tspan></text>
<text x="45.900" y="851" text-decoration="line-through"><tspan class="p">margin-bottom</tspan><tspan class="s">: </tspan><tspan class="q">0px</tspan><tspan class="s">;</tspan></text>
</g>
<path d="M1221 536.700H1664M1221 646H1664M1221 689.300H1664M1221 760.300H1664" stroke="#2a2a2e"/>
<g class="gear" stroke-dasharray="2 1.200">
<circle cx="1277" cy="501" r="3.800"/><circle cx="1259" cy="545" r="3.800"/><circle cx="1295" cy="656" r="3.800"/><circle cx="1295" cy="699" r="3.800"/><circle cx="1307" cy="818" r="3.800"/>
</g>
<circle cx="1354.300" cy="560" r="5.500" fill="#fafafa"/>
<circle cx="1288.300" cy="573" r="5.500" fill="#333" stroke="#666"/>
<path d="M1306 623l4.500 3.500-4.500 3.500zM1288.500 829.500l4.500 3.500-4.500 3.500z" fill="#a0a0a4"/>
<path d="M1252.500 840v6.500h10" fill="none" stroke="#a0a0a4"/>
<!-- rules scrollbar -->
<rect x="1664" y="492" width="14" height="360" fill="#141416"/>
<path d="M1665 502l6-5.500 6 5.500zM1665 844h12l-6 6z" fill="#ff9a1a"/>
<rect x="1665" y="502" width="12.300" height="168" rx="6" fill="#ffa733"/>

<!-- breadcrumbs -->
<rect x="0" y="828" width="1678" height="1" fill="#38383d"/>
<rect x="4" y="829" width="1216" height="23" fill="#232327"/>
<path d="M155 838.500l3 3-3 3" fill="none" stroke="#b1b1b3"/>
<rect x="0" y="851.500" width="1678" height="1.500" fill="#3a3a3f"/>
<!-- console bar -->
<rect x="0" y="853" width="1678" height="28" fill="#232327"/>
<g class="ui">
<text x="13.800" y="846" style="fill:#d0d0d4" textLength="134.200" lengthAdjust="spacingAndGlyphs">html.js-focus-visible.impemnz</text>
<text x="166.500" y="846" style="fill:#4f9ee8" textLength="213" lengthAdjust="spacingAndGlyphs">body#tpl_wbb_thread.mobileShowPagination...</text>
<text x="58.500" y="872.500" style="fill:#6d6d72" textLength="68.500" lengthAdjust="spacingAndGlyphs">Ausgabe filtern</text>
</g>
<path d="M15 862h10M18 862v-1.500h4v1.500M16 863.500h8v10h-8z" fill="none" stroke="#c8c8cc" stroke-width="1.400"/>
<path d="M18.500 865.500v6M21.500 865.500v6" stroke="#c8c8cc"/>
<rect x="34.800" y="857" width="1" height="21" fill="#38383d"/>
<path d="M45.500 862h8l-3 4.500v5.500l-2-1.500v-4z" fill="none" stroke="#8a8a8e" stroke-width="1.100"/>
<rect x="1231.700" y="858" width="1" height="18" fill="#38383d"/><rect x="1500" y="858" width="1" height="18" fill="#38383d"/><rect x="1625" y="858" width="1" height="18" fill="#38383d"/>
<g fill="#4a4a4f">
<rect x="1236" y="859.300" width="39" height="15.700" rx="2"/>
<rect x="1277.300" y="859.300" width="64.400" height="15.700" rx="2"/>
<rect x="1344" y="859.300" width="27.700" height="15.700" rx="2"/>
<rect x="1374.300" y="859.300" width="75.700" height="15.700" rx="2"/>
<rect x="1452.700" y="859.300" width="41.300" height="15.700" rx="2"/>
</g>
<g class="ui">
<text x="1242.300" y="872" style="fill:#c0c0c4" textLength="28" lengthAdjust="spacingAndGlyphs">Fehler</text>
<text x="1282.700" y="872" style="fill:#c0c0c4" textLength="53" lengthAdjust="spacingAndGlyphs">Warnungen</text>
<text x="1349.500" y="872" style="fill:#c0c0c4" textLength="17" lengthAdjust="spacingAndGlyphs">Log</text>
<text x="1379.500" y="872" style="fill:#c0c0c4" textLength="65" lengthAdjust="spacingAndGlyphs">Informationen</text>
<text x="1458.500" y="872" style="fill:#c0c0c4" textLength="30" lengthAdjust="spacingAndGlyphs">Debug</text>
<text x="1512.700" y="872" textLength="16.300" lengthAdjust="spacingAndGlyphs">CSS</text>
<text x="1542" y="872" textLength="19.700" lengthAdjust="spacingAndGlyphs">XHR</text>
<text x="1575.700" y="872" textLength="41" lengthAdjust="spacingAndGlyphs">Anfragen</text>
</g>
<circle cx="1638" cy="868" r="5" fill="none" stroke="#d0d0d4" stroke-width="2.600"/>
<path d="M1638 860.500v3M1638 872.500v3M1630.500 868h3M1642.500 868h3M1632.700 862.700l2 2M1641.300 871.300l2 2M1632.700 873.300l2-2M1641.300 864.700l2-2" stroke="#d0d0d4" stroke-width="1.800"/>
<path d="M1661 863l9.500 9.500M1670.500 863l-9.500 9.500" stroke="#d0d0d4" stroke-width="1.500"/>
</svg>
</body></html>
